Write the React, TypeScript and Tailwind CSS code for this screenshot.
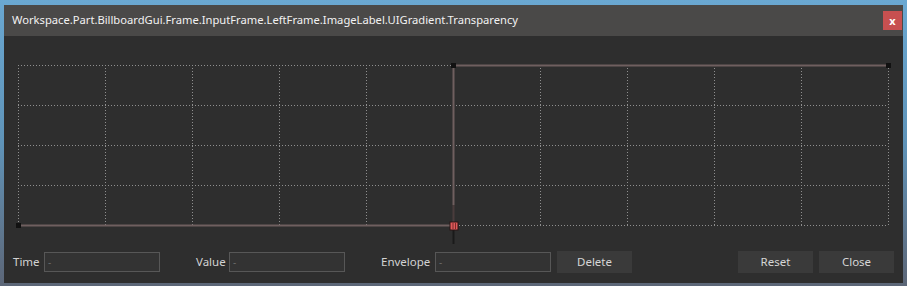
import React from "react";

const GX0 = 14;
const GY0 = 29;
const CW = 87;
const RH = 40;

function Graph() {
  const cols = Array.from({ length: 11 }, (_, i) => GX0 + i * CW);
  const rows = Array.from({ length: 5 }, (_, i) => GY0 + i * RH);
  const x1 = GX0 + 5 * CW;
  const yTop = GY0;
  const yBot = GY0 + 4 * RH;
  return (
    <svg width={899} height={212} className="block">
      {cols.map((x) => (
        <line key={"c" + x} x1={x + 0.5} y1={yTop} x2={x + 0.5} y2={yBot} stroke="#8f8f8f" strokeWidth={1} strokeDasharray="1 2" shapeRendering="crispEdges" />
      ))}
      {rows.map((y) => (
        <line key={"r" + y} x1={GX0} y1={y + 0.5} x2={GX0 + 10 * CW} y2={y + 0.5} stroke="#8f8f8f" strokeWidth={1} strokeDasharray="1 2" shapeRendering="crispEdges" />
      ))}
      <line x1={GX0} y1={yBot + 0.5} x2={x1} y2={yBot + 0.5} stroke="#6f5f5f" strokeWidth={2} />
      <line x1={x1 + 0.5} y1={yTop} x2={x1 + 0.5} y2={yBot - 20} stroke="#6f5f5f" strokeWidth={2} />
      <line x1={x1 + 0.5} y1={yBot - 20} x2={x1 + 0.5} y2={yBot} stroke="#4a3c3c" strokeWidth={2} />
      <line x1={x1} y1={yTop + 0.5} x2={GX0 + 10 * CW} y2={yTop + 0.5} stroke="#6f5f5f" strokeWidth={2} />
      <line x1={x1 + 0.5} y1={yBot} x2={x1 + 0.5} y2={yBot + 19} stroke="#1a1a1a" strokeWidth={2} />
      <rect x={GX0 - 2} y={yBot - 2} width={5} height={5} fill="#111" />
      <rect x={x1 - 2} y={yTop - 2} width={5} height={5} fill="#111" />
      <rect x={GX0 + 10 * CW - 2} y={yTop - 2} width={5} height={5} fill="#111" />
      <rect x={x1 - 3} y={yBot - 3} width={8} height={8} fill="#e05a5a" stroke="#2a1515" strokeWidth={1} />
      <rect x={x1 - 0.5} y={yBot - 2} width={1} height={6} fill="#7a2a2a" />
      <rect x={x1 + 2} y={yBot - 2} width={1} height={6} fill="#7a2a2a" />
    </svg>
  );
}

function Field({ label, labelW }: { label: string; labelW: string }) {
  return (
    <div className="flex items-center">
      <span className={`${labelW} text-[11.5px] text-[#d2d2d2]`}>{label}</span>
      <div className="w-[116px] h-[20px] border border-[#575757] bg-[#333333] flex items-center pl-[3px] text-[10px] text-[#6a6a6a]">-</div>
    </div>
  );
}

function Btn({ label, w }: { label: string; w: string }) {
  return (
    <div className={`${w} h-[22px] bg-[#3a3a3a] flex items-center justify-center text-[11.5px] text-[#d6d6d6]`}>{label}</div>
  );
}

export default function App() {
  return (
    <div
      className="w-[907px] h-[286px] pt-[5px] pl-[4px] pr-[4px] pb-[3px] bg-gradient-to-b from-[#6aa8d2] via-[#5f93b8] to-[#5c6677]"
      style={{ fontFamily: '"Noto Sans", "Open Sans", sans-serif' }}
    >
      <div className="w-[899px] h-[278px] bg-[#2e2e2e] flex flex-col">
        <div className="h-[31px] bg-[#4a4948] flex items-center justify-between pl-[8px] pr-[1px]">
          <span className="text-[11.2px] text-[#f2f2f2]">Workspace.Part.BillboardGui.Frame.InputFrame.LeftFrame.ImageLabel.UIGradient.Transparency</span>
          <div className="w-[19px] h-[19px] bg-[#c75050] flex items-center justify-center text-white text-[11px] font-bold leading-none">x</div>
        </div>
        <Graph />
        <div className="flex items-center pl-[9px] pr-[9px] mt-[3px]">
          <Field label="Time" labelW="w-[31px]" />
          <div className="w-[36px]" />
          <Field label="Value" labelW="w-[33px]" />
          <div className="w-[36px]" />
          <Field label="Envelope" labelW="w-[54px]" />
          <div className="w-[6px]" />
          <Btn label="Delete" w="w-[75px]" />
          <div className="flex-1" />
          <Btn label="Reset" w="w-[75px]" />
          <div className="w-[6px]" />
          <Btn label="Close" w="w-[75px]" />
        </div>
      </div>
    </div>
  );
}
